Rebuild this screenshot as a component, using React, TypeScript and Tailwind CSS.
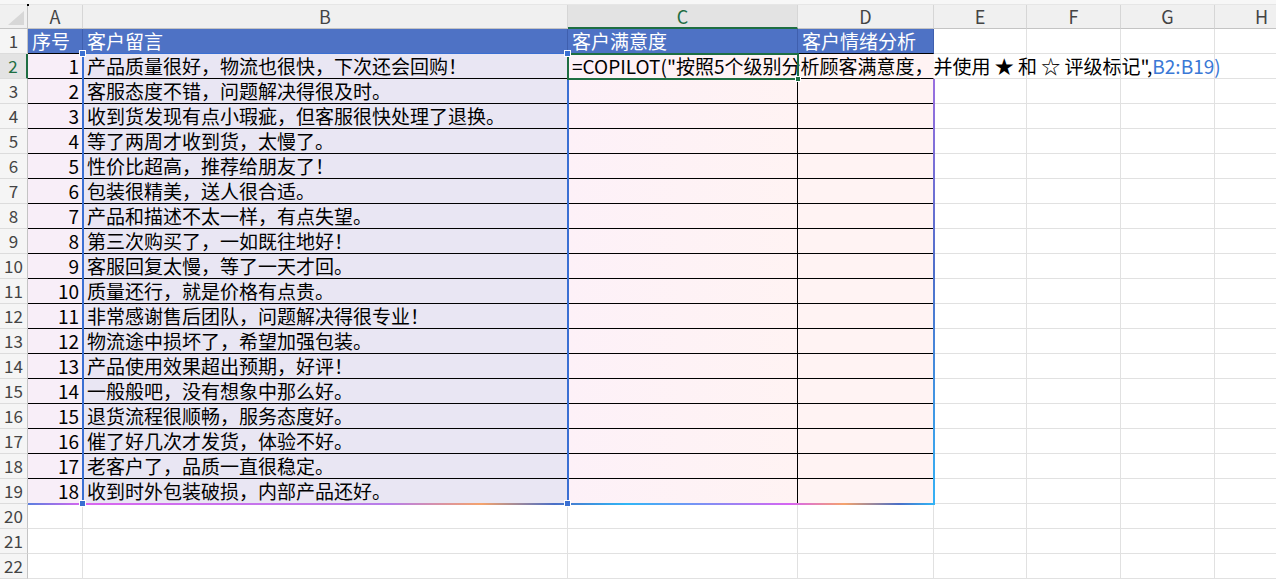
import React from "react";

const font = "font-['Noto_Sans_CJK_SC','Noto_Sans',sans-serif]";

const columns = [
  { key: "A", w: "w-[55px]" },
  { key: "B", w: "w-[485px]" },
  { key: "C", w: "w-[230px]" },
  { key: "D", w: "w-[136px]" },
  { key: "E", w: "w-[93px]" },
  { key: "F", w: "w-[94px]" },
  { key: "G", w: "w-[94px]" },
  { key: "H", w: "w-[94px]" },
  { key: "I", w: "w-[94px]" },
];

const comments = [
  "产品质量很好，物流也很快，下次还会回购！",
  "客服态度不错，问题解决得很及时。",
  "收到货发现有点小瑕疵，但客服很快处理了退换。",
  "等了两周才收到货，太慢了。",
  "性价比超高，推荐给朋友了！",
  "包装很精美，送人很合适。",
  "产品和描述不太一样，有点失望。",
  "第三次购买了，一如既往地好！",
  "客服回复太慢，等了一天才回。",
  "质量还行，就是价格有点贵。",
  "非常感谢售后团队，问题解决得很专业！",
  "物流途中损坏了，希望加强包装。",
  "产品使用效果超出预期，好评！",
  "一般般吧，没有想象中那么好。",
  "退货流程很顺畅，服务态度好。",
  "催了好几次才发货，体验不好。",
  "老客户了，品质一直很稳定。",
  "收到时外包装破损，内部产品还好。",
];

const headers = ["序号", "客户留言", "客户满意度", "客户情绪分析"];

const RowHeader = ({ n, active }: { n: number; active?: boolean }) => (
  <div
    className={`w-[28px] h-[25px] shrink-0 flex items-center justify-center border-b border-[#dcdcdc] text-[17px] ${
      active
        ? "bg-[#e3e3e3] text-[#1e6e42] border-r-2 border-r-[#1e6e42]"
        : "bg-[#f5f5f5] text-[#444] border-r border-r-[#c4c4c4]"
    }`}
  >
    {n}
  </div>
);

const Handle = ({ pos }: { pos: string }) => (
  <div className={`absolute ${pos} w-[7px] h-[7px] bg-[#3a6fd2] border border-white z-30`} />
);

export default function App() {
  return (
    <div className={`relative w-[1276px] h-[581px] overflow-hidden bg-white text-black ${font}`}>
      <div className="h-[5px] bg-[#f7f7f7] border-b border-[#e6e6e6]" />

      {/* column letters */}
      <div className="flex h-[24px]">
        <div className="w-[28px] shrink-0 bg-[#f0f0f0] border-r border-b border-[#c4c4c4] flex items-end justify-end p-[3px]">
          <svg width="16" height="14" viewBox="0 0 16 14">
            <polygon points="16,0 16,14 0,14" fill="#d7d7d7" />
          </svg>
        </div>
        {columns.map((c) => (
          <div
            key={c.key}
            className={`${c.w} shrink-0 flex items-center justify-center text-[18px] border-r border-[#d6d6d6] ${
              c.key === "C"
                ? "bg-[#e3e3e3] text-[#1e6e42] border-b-2 border-b-[#1e6e42]"
                : "bg-[#f0f0f0] text-[#444] border-b border-b-[#c4c4c4]"
            }`}
          >
            {c.key}
          </div>
        ))}
      </div>

      {/* row 1 headers */}
      <div className="flex">
        <RowHeader n={1} />
        {columns.map((c, i) =>
          i < 4 ? (
            <div
              key={c.key}
              className={`${c.w} shrink-0 h-[25px] bg-[#4e72c5] text-white text-[19px] leading-[24px] pl-[4px] border-r border-r-[#3f5fae] border-b border-b-black`}
            >
              {headers[i]}
            </div>
          ) : (
            <div key={c.key} className={`${c.w} shrink-0 h-[25px] border-r border-b border-[#e1e1e1]`} />
          )
        )}
      </div>

      {/* data rows */}
      {comments.map((text, idx) => (
        <div key={idx} className="flex">
          <RowHeader n={idx + 2} active={idx === 0} />
          <div className="w-[55px] shrink-0 h-[25px] bg-[#f8eef8] border-r border-b border-black text-right pr-[3px] text-[19px] leading-[24px]">
            {idx + 1}
          </div>
          <div className="w-[485px] shrink-0 h-[25px] bg-[#e9e6f3] border-r border-b border-black pl-[4px] text-[19px] leading-[24px] whitespace-nowrap">
            {text}
          </div>
          <div className="w-[230px] shrink-0 h-[25px] bg-gradient-to-r from-[#fdf1f8] to-[#fff3f3] border-r border-b border-black relative">
            {idx === 0 && (
              <span className="absolute left-[4px] top-0 z-20 whitespace-nowrap text-[19px] leading-[24px]">
                =COPILOT("按照5个级别分析顾客满意度，并使用 ★ 和 ☆ 评级标记",
                <span className="text-[#3a78d6]">B2:B19)</span>
              </span>
            )}
          </div>
          <div
            className={`w-[136px] shrink-0 h-[25px] bg-[#fff3f3] border-b border-b-black border-r ${
              idx === 0 ? "border-r-[#fff3f3]" : "border-r-black"
            }`}
          />
          {columns.slice(4).map((c) => (
            <div key={c.key} className={`${c.w} shrink-0 h-[25px] border-r border-b border-[#e1e1e1]`} />
          ))}
        </div>
      ))}

      {/* empty rows */}
      {[20, 21, 22].map((n) => (
        <div key={n} className="flex">
          <RowHeader n={n} />
          {columns.map((c) => (
            <div key={c.key} className={`${c.w} shrink-0 h-[25px] border-r border-b border-[#e1e1e1]`} />
          ))}
        </div>
      ))}

      {/* B2:B19 reference highlight */}
      <div className="absolute left-[82px] top-[53px] w-[2px] h-[451px] bg-[#3a6fd2] z-10" />
      <div className="absolute left-[567px] top-[53px] w-[2px] h-[451px] bg-[#3a6fd2] z-10" />
      <div className="absolute left-[82px] top-[53px] w-[487px] h-[1px] bg-[#3a6fd2] z-10" />
      <Handle pos="left-[79px] top-[50px]" />
      <Handle pos="left-[564px] top-[50px]" />
      <Handle pos="left-[79px] top-[500px]" />
      <Handle pos="left-[564px] top-[500px]" />

      {/* copilot range outline */}
      <div className="absolute left-[28px] top-[503px] w-[907px] h-[2px] z-10 bg-[linear-gradient(90deg,#5a7fe0_0%,#d966f0_6%,#b77ee8_40%,#f5a36c_50%,#4a6fc7_58%,#30b6f6_66%,#d765f2_84%,#f5a36c_90%,#4a6fc7_96%,#30b6f6_100%)]" />
      <div className="absolute left-[933px] top-[79px] w-[2px] h-[426px] z-10 bg-[linear-gradient(180deg,#9a6fe0_0%,#4f6fca_45%,#35b2f5_100%)]" />

      {/* active cell C2 */}
      <div className="absolute left-[567px] top-[53px] w-[232px] h-[27px] border-2 border-[#1e6e42] z-20" />
      <div className="absolute left-[795px] top-[76px] w-[6px] h-[6px] bg-[#1e6e42] border border-white z-30" />

      <div className="absolute left-[27px] top-[4px] w-[2px] h-[2px] bg-black" />
    </div>
  );
}
